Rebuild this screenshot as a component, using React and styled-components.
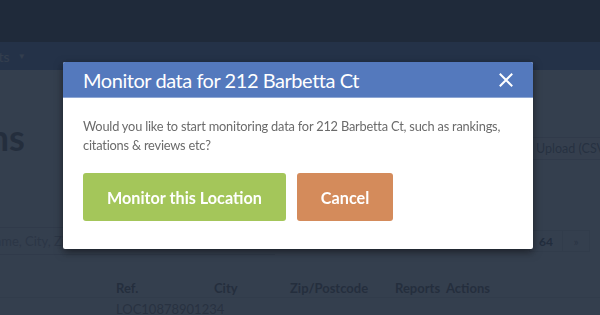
import React from "react";
import styled, { createGlobalStyle } from "styled-components";

const FONT = `"Lato", "Noto Sans", "Liberation Sans", sans-serif`;

const GlobalStyle = createGlobalStyle`
  html, body { margin: 0; padding: 0; }
  body {
    width: 600px;
    height: 315px;
    overflow: hidden;
    background: #f5f7fa;
    font-family: ${FONT};
  }
  * { box-sizing: border-box; }
`;

const Page = styled.div`
  width: 600px;
  height: 315px;
  overflow: hidden;
  display: flex;
  flex-direction: column;
  background: #f5f7fa;
`;

const TopNav = styled.header`
  height: 42px;
  flex: none;
  background: #1f2a3b;
`;

const SubNav = styled.nav`
  height: 28px;
  flex: none;
  background: #517abd;
  display: flex;
  align-items: center;
  margin-left: -38px;
  gap: 8px;
  color: #e8eef8;
  font-size: 14px;
`;

const Caret = styled.span`
  font-size: 8px;
`;

const Main = styled.main`
  margin-left: -120px;
  width: 760px;
  padding: 52px 0 0 15px;
  display: flex;
  flex-direction: column;
`;

const HeadRow = styled.div`
  display: flex;
  align-items: flex-start;
  justify-content: space-between;
  height: 105px;
`;

const PageTitle = styled.h1`
  margin: 0 0 0 -24px;
  font-size: 36px;
  font-weight: 700;
  color: #555;
  line-height: 30px;
`;

const UploadButton = styled.button`
  margin-top: 15px;
  height: 23px;
  width: 113px;
  border: 1px solid #c8ccd2;
  background: #fff;
  color: #6a6f78;
  font-family: ${FONT};
  font-size: 12.5px;
  display: flex;
  align-items: center;
  justify-content: flex-start;
  padding: 0 0 0 8px;
`;

const ToolRow = styled.div`
  display: flex;
  align-items: center;
  justify-content: space-between;
  height: 28px;
`;

const SearchInput = styled.div`
  width: 380px;
  height: 28px;
  border-top: 1px solid #c8ccd2;
  border-bottom: 1px solid #c8ccd2;
  padding-left: 90px;
  display: flex;
  align-items: center;
  color: #9aa0a8;
  font-size: 13px;
`;

const Pager = styled.div`
  display: flex;
  margin-right: 50px;
`;

const PageBox = styled.span`
  width: ${(p) => p.$w}px;
  height: 22px;
  border: 1px solid #d5d9de;
  margin-left: -1px;
  display: flex;
  align-items: center;
  justify-content: center;
  font-size: 12px;
  color: ${(p) => (p.$active ? "#3b4656" : "#8a919b")};
  font-weight: ${(p) => (p.$active ? 700 : 400)};
`;

const Table = styled.div`
  margin-top: 23px;
  display: grid;
  grid-template-columns: 221px 98px 76px 105px 51px 1fr;
  font-size: 13px;
`;

const Th = styled.div`
  font-weight: 700;
  color: #555;
  height: 20px;
  line-height: 20px;
  border-bottom: 1px solid #d5d9de;
`;

const Td = styled.div`
  color: #777;
  height: 22px;
  line-height: 22px;
`;

const Backdrop = styled.div`
  position: fixed;
  inset: 0;
  background: rgba(31, 42, 59, 0.9);
  display: flex;
  align-items: flex-start;
  padding: 62px 0 0 63px;
`;

const Modal = styled.div`
  width: 470px;
  background: #fff;
  border-radius: 2px;
  box-shadow: 0 3px 9px rgba(0, 0, 0, 0.5);
  overflow: hidden;
`;

const ModalHeader = styled.div`
  height: 36px;
  background: #5479bd;
  border-bottom: 1px solid #8ea7d4;
  display: flex;
  align-items: center;
  justify-content: space-between;
  padding: 0 20px;
`;

const ModalTitle = styled.h4`
  margin: 0;
  color: #fff;
  font-size: 20px;
  letter-spacing: -0.45px;
  font-weight: 400;
  line-height: 1;
`;

const CloseButton = styled.button`
  border: 0;
  padding: 0;
  background: none;
  width: 14px;
  height: 14px;
  display: flex;
  cursor: pointer;
`;

const ModalBody = styled.div`
  padding: 19px 20px 28px;
`;

const Message = styled.p`
  margin: 0;
  color: #6b6b6b;
  font-size: 12.8px;
  letter-spacing: -0.2px;
  line-height: 19px;
`;

const Actions = styled.div`
  margin-top: 18px;
  display: flex;
  gap: 11px;
`;

const ActionButton = styled.button`
  height: 48px;
  padding: 0 24px;
  border: 0;
  border-radius: 3px;
  background: ${(p) => p.$bg};
  color: #fff;
  font-family: ${FONT};
  font-size: 16.2px;
  font-weight: 700;
  cursor: pointer;
`;

export default function App() {
  return (
    <>
      <GlobalStyle />
      <Page>
        <TopNav />
        <SubNav>
          <span>Reports</span>
          <Caret>▼</Caret>
        </SubNav>
        <Main>
          <HeadRow>
            <PageTitle>Locations</PageTitle>
            <UploadButton>Upload (CSV)</UploadButton>
          </HeadRow>
          <ToolRow>
            <SearchInput>Name, City, Zip...</SearchInput>
            <Pager>
              <PageBox $w={34} $active>64</PageBox>
              <PageBox $w={28}>»</PageBox>
            </Pager>
          </ToolRow>
          <Table>
            <Th>Agent</Th>
            <Th>Ref.</Th>
            <Th>City</Th>
            <Th>Zip/Postcode</Th>
            <Th>Reports</Th>
            <Th>Actions</Th>
            <Td>Barbetta</Td>
            <Td>LOC10878901234</Td>
            <Td></Td>
            <Td></Td>
            <Td></Td>
            <Td></Td>
          </Table>
        </Main>
      </Page>
      <Backdrop>
        <Modal role="dialog">
          <ModalHeader>
            <ModalTitle>Monitor data for 212 Barbetta Ct</ModalTitle>
            <CloseButton aria-label="Close">
              <svg width="14" height="14" viewBox="0 0 14 14">
                <path d="M1.5 1.5 L12.5 12.5 M12.5 1.5 L1.5 12.5" stroke="#fff" strokeWidth="2" strokeLinecap="square" />
              </svg>
            </CloseButton>
          </ModalHeader>
          <ModalBody>
            <Message>
              Would you like to start monitoring data for 212 Barbetta Ct, such as rankings, citations &amp; reviews etc?
            </Message>
            <Actions>
              <ActionButton $bg="#a4c65a">Monitor this Location</ActionButton>
              <ActionButton $bg="#d48b5b">Cancel</ActionButton>
            </Actions>
          </ModalBody>
        </Modal>
      </Backdrop>
    </>
  );
}
